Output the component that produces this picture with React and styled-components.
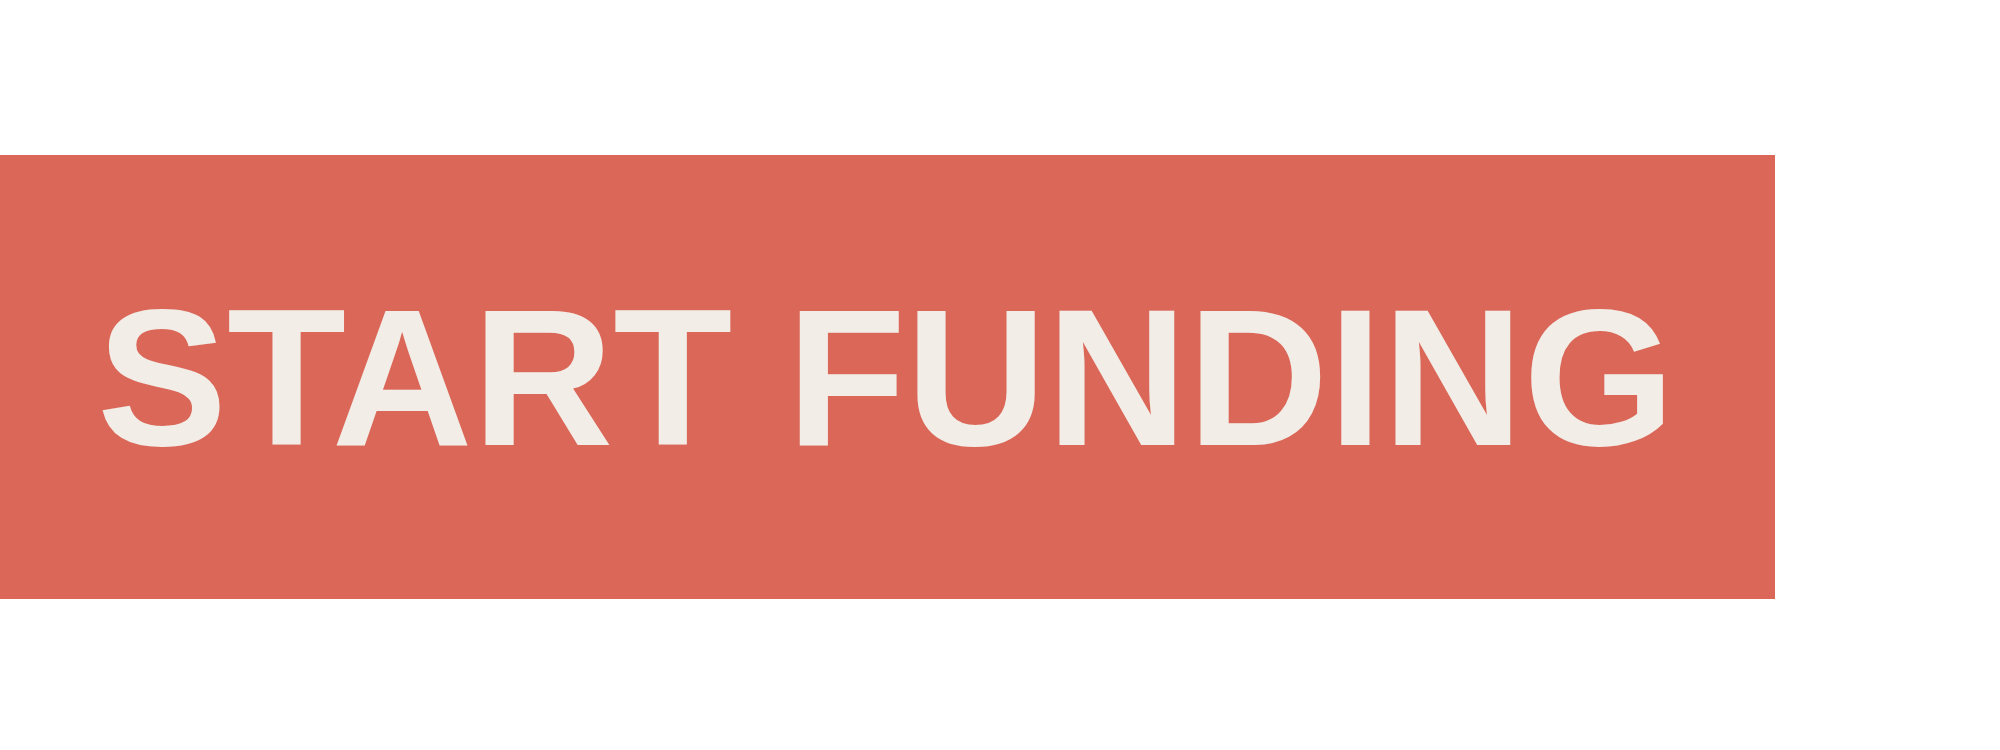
import React from "react";
import styled, { createGlobalStyle } from "styled-components";

const Global = createGlobalStyle`
  html, body {
    margin: 0;
    padding: 0;
    background: #ffffff;
  }
`;

const Page = styled.main`
  width: 2000px;
  height: 750px;
  padding-top: 155px;
  box-sizing: border-box;
`;

const Banner = styled.section`
  width: 1775px;
  height: 444px;
  background: #da6758;
  display: flex;
  align-items: center;
  padding-left: 97px;
  box-sizing: border-box;
`;

const Headline = styled.h1`
  margin: 0;
  font-family: "Liberation Sans", Arial, sans-serif;
  font-weight: 700;
  font-size: 195px;
  line-height: 1;
  color: #f2ede7;
  white-space: nowrap;
`;

export default function App() {
  return (
    <>
      <Global />
      <Page>
        <Banner>
          <Headline>START FUNDING</Headline>
        </Banner>
      </Page>
    </>
  );
}
